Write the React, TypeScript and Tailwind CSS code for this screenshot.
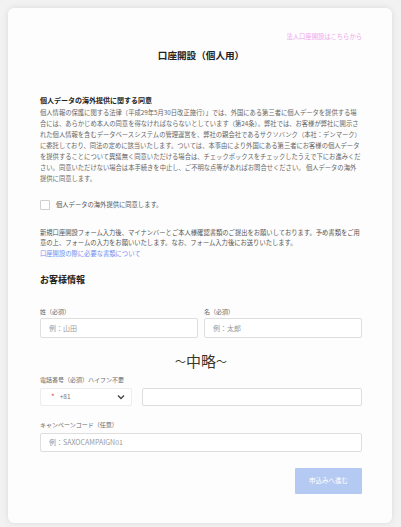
import React from "react";

const font = { fontFamily: '"Noto Sans CJK JP", "Noto Sans", sans-serif' };

export default function App() {
  return (
    <div className="min-h-screen w-full bg-[#f2f2f2] pt-[8px] px-[8px]" style={font}>
      <div className="w-[384px] h-[515px] bg-[#fdfdfd] rounded-[6px] shadow-[0_0_6px_rgba(0,0,0,0.10)] pt-[25px] pl-[32px] pr-[30px] flex flex-col">
        <div className="text-right text-[6.3px] leading-[8px] text-[#f0a4ee] pr-[0px]">法人口座開設はこちらから</div>
        <div className="mt-[7px] text-center text-[9.6px] leading-[14px] font-bold text-[#222]">口座開設（個人用）</div>

        <div className="mt-[33px] text-[7px] leading-[10px] font-bold text-[#222]">個人データの海外提供に関する同意</div>
        <p className="mt-[1.5px] text-[6.3px] leading-[11px] text-[#666] whitespace-nowrap">
          個人情報の保護に関する法律（平成29年5月30日改正施行）」では、外国にある第三者に個人データを提供する場<br />
          合には、あらかじめ本人の同意を得なければならないとしています（第24条）。弊社では、お客様が弊社に開示さ<br />
          れた個人情報を含むデータベースシステムの管理運営を、弊社の親会社であるサクソバンク（本社：デンマーク）<br />
          に委託しており、同法の定めに該当いたします。ついては、本事由により外国にある第三者にお客様の個人データ<br />
          を提供することについて異議無く同意いただける場合は、チェックボックスをチェックしたうえで下にお進みくだ<br />
          さい。同意いただけない場合は本手続きを中止し、ご不明な点等があればお問合せください。 個人データの海外<br />
          提供に同意します。
        </p>

        <div className="mt-[16.5px] flex items-center h-[10px]">
          <div className="w-[10px] h-[10px] border border-[#cfcfcf] rounded-[1px] bg-white" />
          <span className="ml-[6px] text-[6.3px] leading-[8px] text-[#555]">個人データの海外提供に同意します。</span>
        </div>

        <p className="mt-[17.5px] text-[6.3px] leading-[10.5px] text-[#555] whitespace-nowrap">
          新規口座開設フォーム入力後、マイナンバーとご本人様確認書類のご提出をお願いしております。予め書類をご用<br />
          意の上、フォームの入力をお願いいたします。なお、フォーム入力後にお送りいたします。<br />
          <span className="text-[#6f8ff0]">口座開設の際に必要な書類について</span>
        </p>

        <div className="mt-[15px] text-[9px] leading-[12px] font-bold text-[#222]">お客様情報</div>

        <div className="mt-[22px] grid grid-cols-2 gap-x-[6px]">
          <div className="flex flex-col">
            <div className="text-[6px] leading-[8px] text-[#666]">姓（必須）</div>
            <div className="mt-[2px] h-[20px] border border-[#dedede] rounded-[2px] bg-white flex items-center pl-[8px] text-[7px] text-[#999]">例：山田</div>
          </div>
          <div className="flex flex-col">
            <div className="text-[6px] leading-[8px] text-[#666]">名（必須）</div>
            <div className="mt-[2px] h-[20px] border border-[#dedede] rounded-[2px] bg-white flex items-center pl-[8px] text-[7px] text-[#999]">例：太郎</div>
          </div>
        </div>

        <div className="mt-[13px] h-[20px] flex items-center justify-center text-[#3a3828]">
          <span className="text-[11px] leading-[20px]">〜</span>
          <span className="text-[15px] leading-[20px]">中略</span>
          <span className="text-[11px] leading-[20px]">〜</span>
        </div>

        <div className="mt-[5px] text-[6px] leading-[8px] text-[#666]">電話番号（必須）ハイフン不要</div>
        <div className="mt-[4px] flex gap-x-[10px]">
          <div className="w-[92px] h-[18px] border border-[#ececec] rounded-[2px] bg-white flex items-center pl-[10px] pr-[6px]">
            <span className="text-[8px] leading-[8px] text-[#e04848]">*</span>
            <span className="ml-[5px] text-[6.5px] text-[#777]">+81</span>
            <svg className="ml-auto" width="8" height="6" viewBox="0 0 8 6">
              <path d="M1 1.5 L4 4.5 L7 1.5" fill="none" stroke="#444" strokeWidth="1.4" />
            </svg>
          </div>
          <div className="flex-1 h-[18px] border border-[#dedede] rounded-[2px] bg-white" />
        </div>

        <div className="mt-[15px] text-[6px] leading-[8px] text-[#666]">キャンペーンコード（任意）</div>
        <div className="mt-[4px] h-[19px] border border-[#dedede] rounded-[2px] bg-white flex items-center pl-[8px] text-[7px] text-[#999]">例：SAXOCAMPAIGN01</div>

        <div className="mt-[16px] self-end w-[67px] h-[26px] bg-[#b4caf2] rounded-[1px] flex items-center justify-center text-[6.5px] text-white">申込みへ進む</div>
      </div>
    </div>
  );
}
